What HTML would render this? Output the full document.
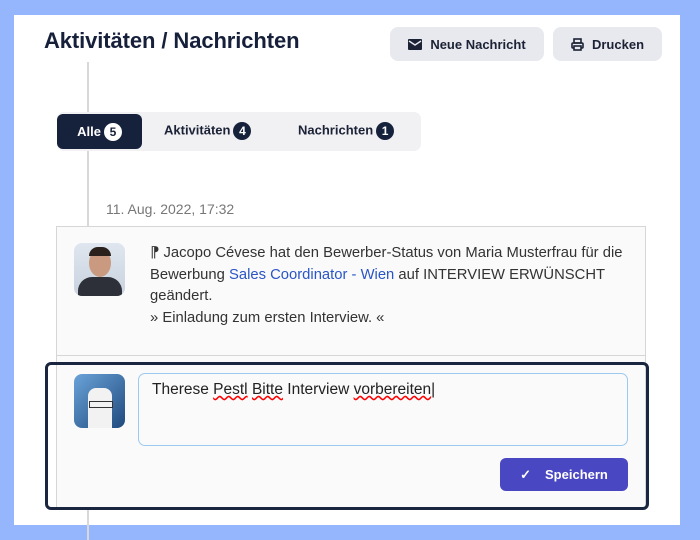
<!DOCTYPE html><html><head><style>
body{margin:0;width:700px;height:540px;background:#95b5fd;font-family:"Liberation Sans",sans-serif;position:relative;overflow:hidden}
.p{position:absolute;left:14px;top:15px;width:666px;height:510px;background:#fff}
.a{position:absolute}
.btn{position:absolute;top:27px;height:34px;background:#e8e9ee;border-radius:8px;font-size:13px;font-weight:bold;color:#1b2236;display:flex;align-items:center;justify-content:center;gap:8px}
.b{display:inline-block;background:#16213c;color:#fff;border-radius:10px;font-size:12px;width:18px;height:18px;line-height:18px;text-align:center;margin-left:3px;vertical-align:middle}
</style></head><body>
<div class="p"></div>
<div class="a" style="left:44px;top:28px;font-size:22px;font-weight:bold;color:#16203a;letter-spacing:-0.1px">Aktivitäten / Nachrichten</div>
<div class="btn" style="left:390px;width:154px"><svg width="14" height="11" viewBox="0 0 14 11"><rect width="14" height="11" rx="1" fill="#1b2236"/><path d="M1 2l6 4 6-4" stroke="#e8e9ee" stroke-width="1.5" fill="none"/></svg>Neue Nachricht</div>
<div class="btn" style="left:553px;width:109px"><svg width="13" height="13" viewBox="0 0 13 13" fill="none" stroke="#1b2236" stroke-width="1.6"><rect x="3" y="1" width="7" height="4"/><rect x="1" y="5" width="11" height="5" rx="1"/><rect x="3" y="8" width="7" height="4" fill="#e8e9ee"/></svg>Drucken</div>
<div class="a" style="left:87px;top:62px;width:2px;height:478px;background:#d8d8d8"></div>
<div class="a" style="left:57px;top:112px;width:364px;height:39px;background:#f1f1f4;border-radius:7px"></div>
<div class="a" style="left:57px;top:114px;width:85px;height:35px;background:#16213c;border-radius:6px;color:#fff;font-size:13px;font-weight:bold;display:flex;align-items:center;justify-content:center">Alle<span class="b" style="background:#fff;color:#16213c">5</span></div>
<div class="a" style="left:164px;top:122px;font-size:13px;font-weight:bold;color:#1b2236">Aktivitäten<span class="b">4</span></div>
<div class="a" style="left:298px;top:122px;font-size:13px;font-weight:bold;color:#1b2236">Nachrichten<span class="b">1</span></div>
<div class="a" style="left:106px;top:201px;font-size:14px;color:#777">11. Aug. 2022, 17:32</div>
<div class="a" style="left:56px;top:226px;width:588px;height:280px;background:#fafafa;border:1px solid #d6d6d6"></div>
<div class="a" style="left:56px;top:355px;width:590px;height:1px;background:#d6d6d6"></div>
<div class="a" style="left:74px;top:243px;width:51px;height:53px;border-radius:8px;background:linear-gradient(#dfe6ef,#c8d2de);overflow:hidden"><div class="a" style="left:15px;top:6px;width:22px;height:28px;border-radius:50%;background:#c99a80"></div><div class="a" style="left:15px;top:4px;width:22px;height:9px;border-radius:10px 10px 0 0;background:#2a211c"></div><div class="a" style="left:4px;top:34px;width:44px;height:25px;border-radius:14px 14px 0 0;background:#2d3038"></div></div>
<div class="a" style="left:150px;top:243px;width:484px;font-size:14.8px;line-height:21.5px;color:#333">⁋ Jacopo Cévese hat den Bewerber-Status von Maria Musterfrau für die Bewerbung <span style="color:#2a55c6">Sales Coordinator - Wien</span> auf INTERVIEW ERWÜNSCHT geändert.<br>» Einladung zum ersten Interview. «</div>
<div class="a" style="left:45px;top:362px;width:598px;height:142px;border:3px solid #1a2540;border-radius:6px"></div>
<div class="a" style="left:74px;top:374px;width:51px;height:54px;border-radius:8px;background:linear-gradient(135deg,#6aa3d8,#1f4a7e);overflow:hidden"><div class="a" style="left:14px;top:14px;width:24px;height:40px;background:#f2f2f2;border-radius:8px 8px 0 0"></div><div class="a" style="left:15px;top:27px;width:22px;height:5px;border:1px solid #333"></div></div>
<div class="a" style="left:138px;top:373px;width:488px;height:71px;border:1.5px solid #9cc9f0;border-radius:7px;background:#fafafa"></div>
<div class="a" style="left:152px;top:381px;font-size:15.5px;color:#222">Therese <u style="text-decoration:underline wavy red">Pestl</u> <u style="text-decoration:underline wavy red">Bitte</u> Interview <u style="text-decoration:underline wavy red">vorbereiten</u>|</div>
<div class="a" style="left:500px;top:458px;width:128px;height:33px;background:#4a47c2;border-radius:6px;color:#fff;font-size:13px;font-weight:bold;display:flex;align-items:center;justify-content:center;gap:14px"><span>✓</span>Speichern</div>
</body></html>
